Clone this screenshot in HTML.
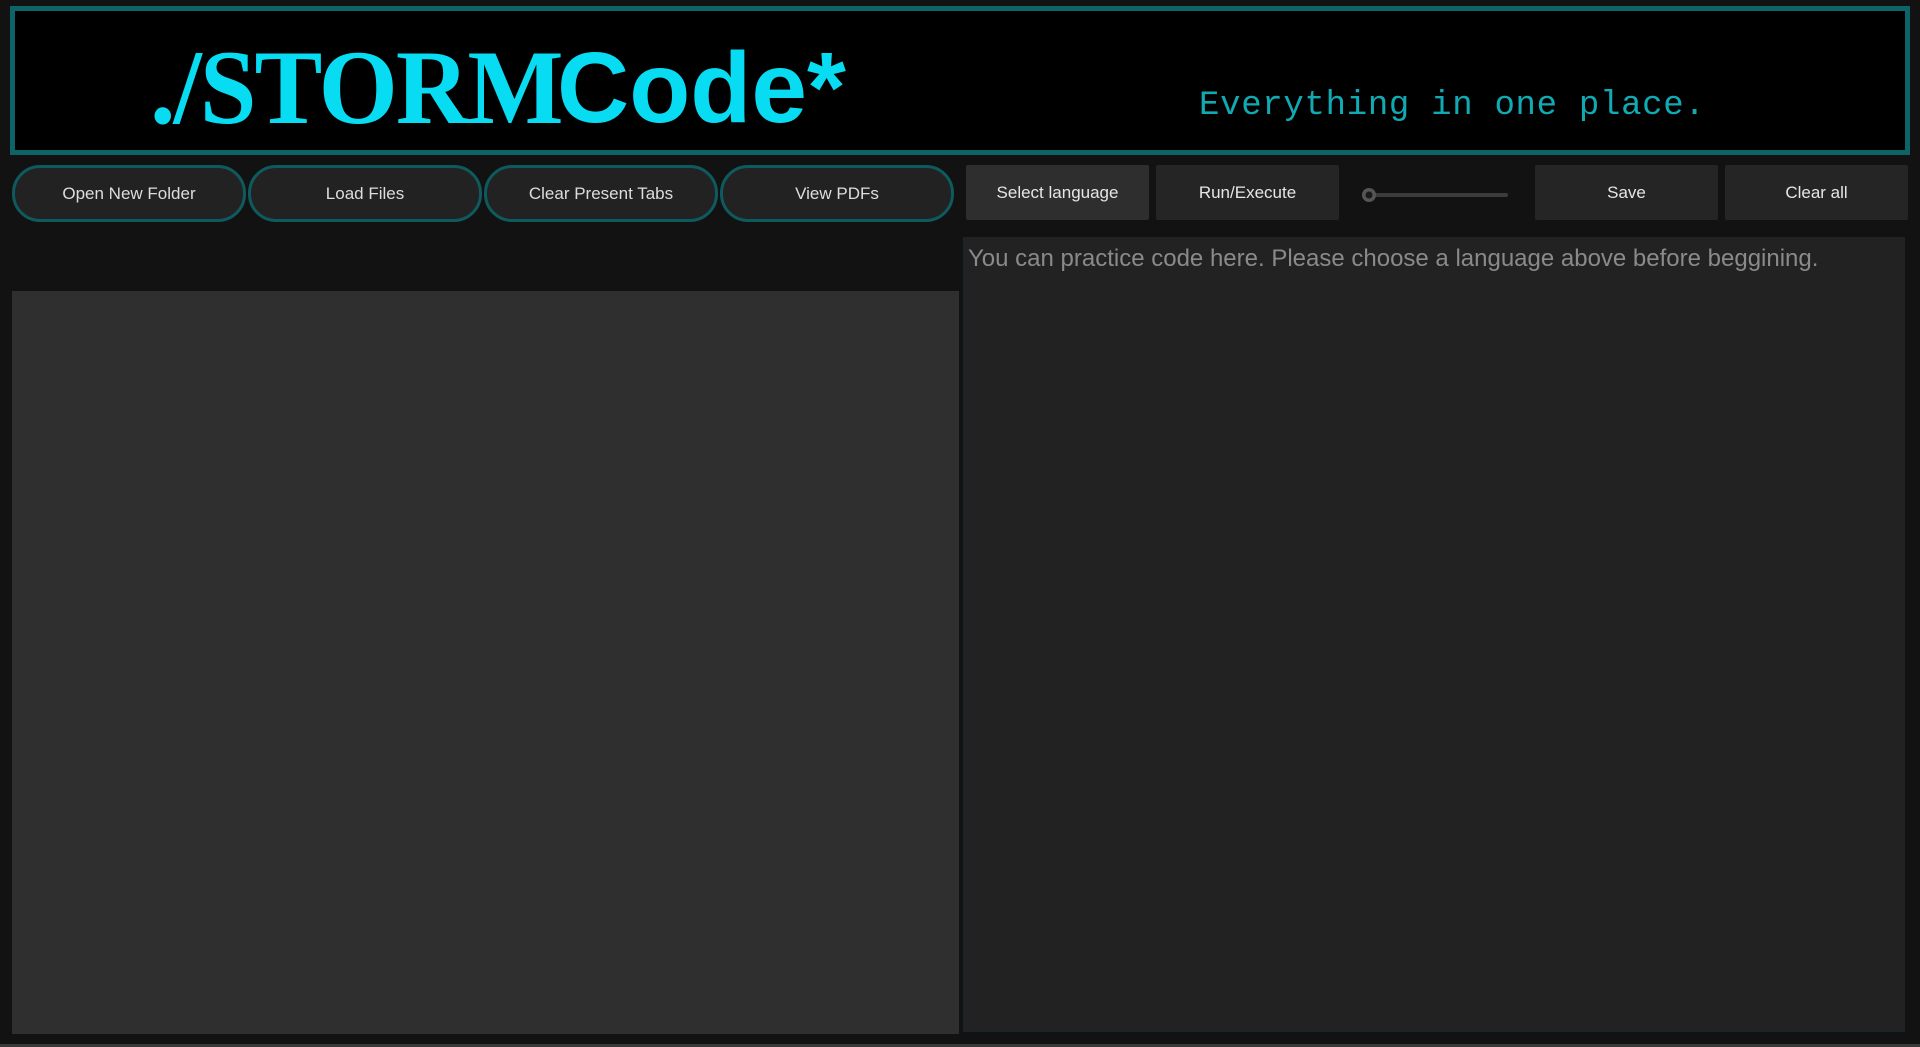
<!DOCTYPE html>
<html><head><meta charset="utf-8"><style>
*{box-sizing:border-box;margin:0;padding:0}
html,body{width:1920px;height:1047px;background:#121212;overflow:hidden;font-family:"Liberation Sans",sans-serif}
.hdr{position:absolute;left:10px;top:6px;width:1900px;height:149px;background:#000;border:5px solid #0e6368}
.t1{position:absolute;left:135px;top:16px;font-family:"Liberation Serif",serif;font-weight:bold;font-size:106px;color:#08dcf2;letter-spacing:-2px;transform:scaleX(0.96);transform-origin:left}
.t2{position:absolute;left:542px;top:20px;font-family:"Liberation Sans",sans-serif;font-weight:bold;font-size:100px;color:#08dcf2}
.tag{position:absolute;left:1184px;top:76px;font-family:"Liberation Mono",monospace;font-size:34px;color:#12aab2;letter-spacing:0.7px}
.rb{position:absolute;top:165px;height:57px;width:234px;background:#222;border:3px solid #0e5a5e;border-radius:28px;color:#ddd;font-size:17px;display:flex;align-items:center;justify-content:center}
.sb{position:absolute;top:165px;height:55px;width:183px;background:#252525;color:#e6e6e6;font-size:17px;display:flex;align-items:center;justify-content:center;border-radius:2px}
.left{position:absolute;left:12px;top:291px;width:947px;height:743px;background:#2f2f2f}
.right{position:absolute;left:963px;top:237px;width:942px;height:795px;background:#222;border-left:2px solid #1b2427;border-bottom:2px solid #1b2427}
.ph{position:absolute;left:3px;top:8px;font-size:24px;color:#8a8a8a}
.bl{position:absolute;left:0;top:1044px;width:1920px;height:3px;background:#3a3a3a}
</style></head><body>
<div class="hdr">
<div class="t1">./STORM</div>
<div class="t2">Code*</div>
<div class="tag">Everything in one place.</div>
</div>
<div class="rb" style="left:12px">Open New Folder</div>
<div class="rb" style="left:248px">Load Files</div>
<div class="rb" style="left:484px">Clear Present Tabs</div>
<div class="rb" style="left:720px">View PDFs</div>
<div class="sb" style="left:966px;background:#2e2e2e">Select language</div>
<div class="sb" style="left:1156px">Run/Execute</div>
<svg style="position:absolute;left:1355px;top:184px" width="160" height="24">
<rect x="10" y="9" width="143" height="4" rx="2" fill="#3c3c3c"/>
<circle cx="14" cy="11" r="7" fill="#555"/><circle cx="14" cy="11" r="3.5" fill="#1a1a1a"/>
</svg>
<div class="sb" style="left:1535px">Save</div>
<div class="sb" style="left:1725px">Clear all</div>
<div class="left"></div>
<div class="right"><div class="ph">You can practice code here. Please choose a language above before beggining.</div></div>
<div class="bl"></div>
</body></html>
